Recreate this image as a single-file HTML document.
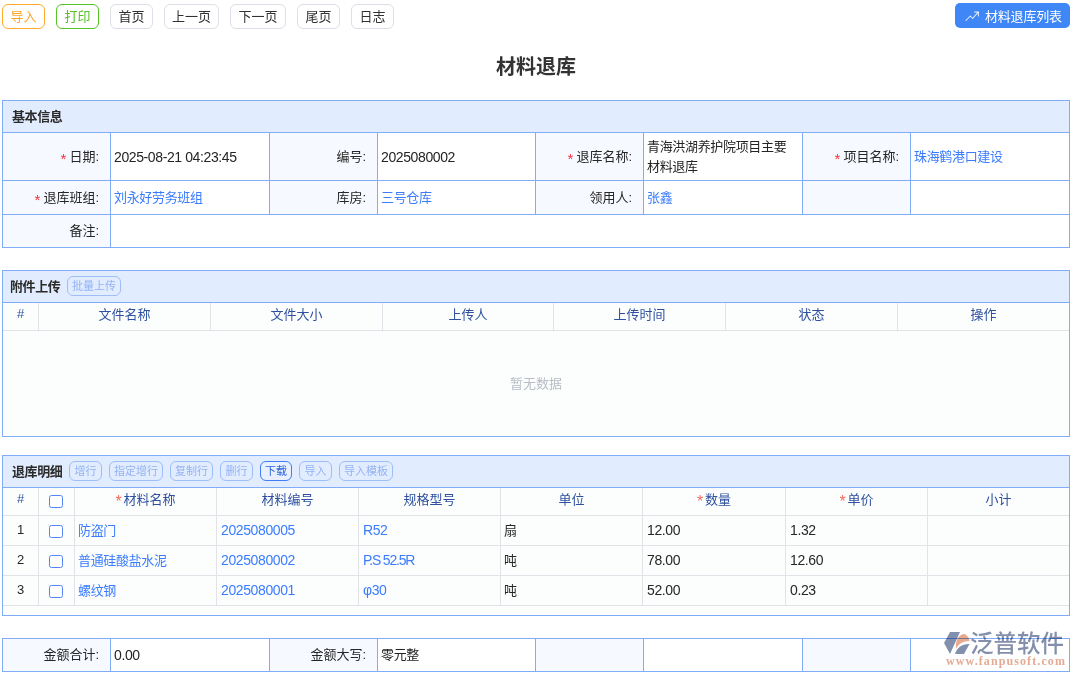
<!DOCTYPE html>
<html lang="zh-CN">
<head>
<meta charset="utf-8">
<title>材料退库</title>
<style>
*{box-sizing:border-box;margin:0;padding:0}
html,body{width:1074px;height:676px;overflow:hidden;background:#fff}
body{position:relative;font-family:"Liberation Sans","Noto Sans CJK SC",sans-serif;font-size:13px;color:#303133}
.abs{position:absolute}
/* top buttons */
.tb{position:absolute;top:4px;height:25px;border:1px solid #dcdfe6;border-radius:6px;background:#fff;color:#303133;font-size:13px;line-height:23px;text-align:center;white-space:nowrap}
.tb.o{border-color:#ffaa2b;color:#faa628}
.tb.g{border-color:#55c525;color:#52bf22}
.list{position:absolute;left:955px;top:3px;width:115px;height:25px;border-radius:5px;background:#3f86f7;color:#fff;font-size:13px;line-height:25px;white-space:nowrap}
.list svg{position:absolute;left:10px;top:8px}
.list span{position:absolute;left:30px;top:1px;letter-spacing:-.2px}
h1{position:absolute;left:0;top:53px;width:1072px;text-align:center;font-size:20px;line-height:28px;font-weight:bold;color:#333}
/* panels */
.panel{position:absolute;left:2px;width:1068px;border:1px solid #80acf8;background:#fcfefd}
.ph{height:32px;background:#e2ecff;border-bottom:1px solid #80acf8;position:relative}
.ph b{position:absolute;left:9px;top:0;line-height:31px;font-size:13px;color:#2a2a2a;letter-spacing:-.4px}
.sb{position:absolute;top:5px;height:20px;border:1px solid #9fbdf6;border-radius:6px;color:#93b3f2;font-size:11px;line-height:19px;text-align:center;white-space:nowrap;background:transparent}
.sb.on{border-color:#3f7df8;color:#2b63dc;background:#e8f0ff}
/* form table */
table{border-collapse:collapse;table-layout:fixed}
.ft{position:absolute;left:2px;width:1067px}
.ft td{border:1px solid #80acf8;font-size:13px;line-height:20px;vertical-align:middle;background:#fff;padding:0 4px 0 3px;color:#242424}
.ft td.l{background:#f6f9ff;text-align:right;padding:0 11px 0 0;color:#262626}
.ft i{font-style:normal;color:#f5323c;margin-right:3px;font-size:15px;line-height:0;position:relative;top:3px}
.ft td,.gt td{letter-spacing:-.33px}
.ft td.l{letter-spacing:0}
.ft td.n,.gt td.n,.n{letter-spacing:-.39px;font-size:14px}
.lk{color:#3b7cff}
/* grid */
.gt{width:1066px;border-collapse:separate;border-spacing:0}
.gt th{height:28px;padding-bottom:6px;font-weight:normal;color:#2f50a0;font-size:13px;border-right:1px solid #e2e2e9;border-bottom:1px solid #e2e2e9;text-align:center;background:#fcfefd}
.gt td{height:30px;font-size:13px;border-right:1px solid #e2e2e9;border-bottom:1px solid #e2e2e9;padding:0 4px 2px 4px;color:#262626;background:#fcfefd;white-space:nowrap}
.gt th:last-child,.gt td:last-child{border-right:0}
.gt td.c{text-align:center;padding:0 0 2px 0}
.gt em{font-style:normal;color:#f56c5c;margin-right:2px;font-size:16px;line-height:0;position:relative;top:3px}
.z{position:relative;top:0;margin-left:-1px}
.gt td .cb{position:relative;top:1px}
.gt th .cb{position:relative;top:2px}
.cb{display:inline-block;width:14px;height:13px;border:1px solid #5585f5;border-radius:2.5px;margin-left:-1px;background:#fff;vertical-align:middle}
.nodata{position:absolute;left:0;top:60px;width:1066px;height:106px;line-height:106px;text-align:center;color:#b9bcc4;font-size:13px}
</style>
</head>
<body>
<div class="tb o" style="left:2px;width:43px">导入</div>
<div class="tb g" style="left:56px;width:43px">打印</div>
<div class="tb" style="left:110px;width:43px">首页</div>
<div class="tb" style="left:164px;width:55px">上一页</div>
<div class="tb" style="left:230px;width:56px">下一页</div>
<div class="tb" style="left:297px;width:43px">尾页</div>
<div class="tb" style="left:351px;width:43px">日志</div>
<div class="list"><svg width="14.3" height="11" viewBox="0 0 15 11" preserveAspectRatio="none" fill="none" stroke="#fff" stroke-opacity=".9" stroke-width="1.05" stroke-linecap="round" stroke-linejoin="round"><path d="M1 9.5 L5.5 5 L8 7.5 L13.8 1.2"/><path d="M10 1 H14 V5"/></svg><span>材料退库列表</span></div>

<h1>材料退库</h1>

<!-- panel 1 -->
<div class="panel" style="top:100px;height:33px;border-bottom:0"><div class="ph"><b>基本信息</b></div></div>
<table class="ft" style="top:132px">
<colgroup><col style="width:108px"><col style="width:159px"><col style="width:108px"><col style="width:158px"><col style="width:108px"><col style="width:159px"><col style="width:108px"><col style="width:159px"></colgroup>
<tr style="height:48px"><td class="l"><i>*</i>日期:</td><td class="n">2025-08-21 04:23:45</td><td class="l">编号:</td><td class="n">2025080002</td><td class="l"><i>*</i>退库名称:</td><td>青海洪湖养护院项目主要材料退库</td><td class="l"><i>*</i>项目名称:</td><td><span class="lk">珠海鹤港口建设</span></td></tr>
<tr style="height:34px"><td class="l"><i>*</i>退库班组:</td><td><span class="lk">刘永好劳务班组</span></td><td class="l">库房:</td><td><span class="lk">三号仓库</span></td><td class="l">领用人:</td><td><span class="lk">张鑫</span></td><td class="l"></td><td></td></tr>
<tr style="height:33px"><td class="l">备注:</td><td colspan="7"></td></tr>
</table>

<!-- panel 2 -->
<div class="panel" style="top:270px;height:167px">
<div class="ph"><b style="left:7px">附件上传</b><div class="sb" style="left:64px;width:54px">批量上传</div></div>
<table class="gt">
<colgroup><col style="width:36px"><col style="width:172px"><col style="width:172px"><col style="width:171px"><col style="width:172px"><col style="width:172px"><col style="width:171px"></colgroup>
<tr><th>#</th><th>文件名称</th><th>文件大小</th><th>上传人</th><th>上传时间</th><th>状态</th><th>操作</th></tr>
</table>
<div class="nodata">暂无数据</div>
</div>

<!-- panel 3 -->
<div class="panel" style="top:455px;height:161px">
<div class="ph"><b>退库明细</b>
<div class="sb" style="left:66px;width:33px">增行</div>
<div class="sb" style="left:106px;width:54px">指定增行</div>
<div class="sb" style="left:167px;width:43px">复制行</div>
<div class="sb" style="left:217px;width:33px">删行</div>
<div class="sb on" style="left:257px;width:32px">下载</div>
<div class="sb" style="left:296px;width:33px">导入</div>
<div class="sb" style="left:336px;width:54px">导入模板</div>
</div>
<table class="gt">
<colgroup><col style="width:36px"><col style="width:36px"><col style="width:142px"><col style="width:142px"><col style="width:142px"><col style="width:142px"><col style="width:143px"><col style="width:142px"><col style="width:141px"></colgroup>
<tr><th>#</th><th><span class="cb"></span></th><th><em>*</em>材料名称</th><th>材料编号</th><th>规格型号</th><th>单位</th><th><em>*</em>数量</th><th><em>*</em>单价</th><th>小计</th></tr>
<tr><td class="c">1</td><td class="c"><span class="cb"></span></td><td><span class="lk z">防盗门</span></td><td><span class="lk n">2025080005</span></td><td><span class="lk n">R52</span></td><td><span class="z">扇</span></td><td class="n">12.00</td><td class="n">1.32</td><td></td></tr>
<tr><td class="c">2</td><td class="c"><span class="cb"></span></td><td><span class="lk z">普通硅酸盐水泥</span></td><td><span class="lk n">2025080002</span></td><td><span class="lk n" style="letter-spacing:-1.2px">P.S 52.5R</span></td><td><span class="z">吨</span></td><td class="n">78.00</td><td class="n">12.60</td><td></td></tr>
<tr><td class="c">3</td><td class="c"><span class="cb"></span></td><td><span class="lk z">螺纹钢</span></td><td><span class="lk n">2025080001</span></td><td><span class="lk n">φ30</span></td><td><span class="z">吨</span></td><td class="n">52.00</td><td class="n">0.23</td><td></td></tr>
</table>
</div>

<!-- summary -->
<table class="ft" style="top:638px">
<colgroup><col style="width:108px"><col style="width:159px"><col style="width:108px"><col style="width:158px"><col style="width:108px"><col style="width:159px"><col style="width:108px"><col style="width:159px"></colgroup>
<tr style="height:33px"><td class="l">金额合计:</td><td class="n">0.00</td><td class="l">金额大写:</td><td>零元整</td><td class="l"></td><td></td><td class="l"></td><td></td></tr>
</table>

<!-- watermark -->
<div class="abs" style="left:944px;top:630px;width:126px;height:40px;mix-blend-mode:multiply">
<svg class="abs" style="left:0;top:2px" width="26" height="23" viewBox="0 0 26 23"><path d="M6 0 H16 L6 22 L0 11 Z" fill="#8290ae"/><path d="M12 17 C11 8 15 2 21 2 C24 4 25.5 7 25.5 9 C19 9 14 12 12 17 Z" fill="#e8a98c"/><path d="M11 22 C13 15 19 11.5 25.5 12 L20 22 Z" fill="#8290ae"/></svg>
<div class="abs" style="left:26px;top:0px;font-size:23.5px;font-weight:500;line-height:28px;color:#8490ab;white-space:nowrap;letter-spacing:0">泛普软件</div>
<div class="abs" style="left:2px;top:24px;font-family:'Liberation Serif',serif;font-weight:bold;font-size:12px;line-height:14px;color:#e3ab93;letter-spacing:1.1px;white-space:nowrap">www.fanpusoft.com</div>
</div>
</body>
</html>
